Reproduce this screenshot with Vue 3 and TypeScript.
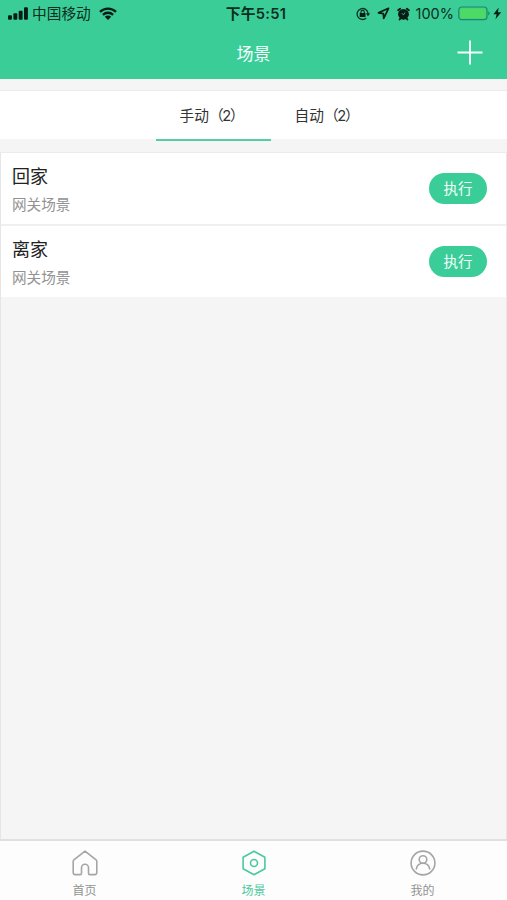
<script setup lang="ts">
import { ref } from 'vue'

interface Scene {
  id: number
  name: string
  kind: string
}

type Mode = 'manual' | 'auto'
type Page = 'home' | 'scene' | 'mine'

const tabs: { key: Mode; label: string; count: number }[] = [
  { key: 'manual', label: '手动', count: 2 },
  { key: 'auto', label: '自动', count: 2 },
]
const scenes: Scene[] = [
  { id: 1, name: '回家', kind: '网关场景' },
  { id: 2, name: '离家', kind: '网关场景' },
]
const pages: { key: Page; label: string }[] = [
  { key: 'home', label: '首页' },
  { key: 'scene', label: '场景' },
  { key: 'mine', label: '我的' },
]
const activeTab = ref<Mode>('manual')
const activePage = ref<Page>('scene')
</script>

<template>
  <div class="app">
    <header class="header">
      <div class="status">
        <div class="status-left">
          <svg class="signal" width="21" height="14" viewBox="0 0 21 14">
            <rect x="0" y="8.3" width="3.9" height="4.4" rx="1" />
            <rect x="5.4" y="6.3" width="3.9" height="6.4" rx="1" />
            <rect x="10.7" y="3.8" width="3.9" height="8.9" rx="1" />
            <rect x="16" y="0.3" width="3.9" height="12.4" rx="1" />
          </svg>
          <span class="carrier">中国移动</span>
          <svg class="wifi" width="18" height="14" viewBox="0 0 18 14">
            <path d="M1 4.8a11.6 11.6 0 0 1 16 0M3.9 7.8a7.4 7.4 0 0 1 10.2 0" fill="none" stroke="#071d15" stroke-width="2.3" />
            <path d="M5.8 9.7a4.6 4.6 0 0 1 6.4 0L9 12.9Z" />
          </svg>
        </div>
        <span class="time">下午5:51</span>
        <div class="status-right">
          <svg class="lock" width="15" height="14" viewBox="0 0 15 14">
            <path d="M10.2 11.2A5.5 5.5 0 1 1 12.1 6.3" fill="none" stroke="#0b2e21" stroke-width="1.3" />
            <path d="M9.9 6.2h4.2l-2.1 3Z" />
            <rect x="3.7" y="5.9" width="5.8" height="4.2" rx=".5" />
            <path d="M4.9 6.2V5.1a1.7 1.7 0 0 1 3.4 0v1.1" fill="none" stroke="#0b2e21" stroke-width="1.1" />
          </svg>
          <svg class="arrow" width="13" height="13" viewBox="0 0 13 13">
            <path d="M11.5 1.3 1.5 5.8l4.9.8.3 4.9Z" fill="none" stroke="#071d15" stroke-width="1.7" stroke-linejoin="round" />
          </svg>
          <svg class="alarm" width="13" height="14" viewBox="0 0 13 14">
            <circle cx="6.5" cy="7.3" r="5.4" />
            <path d="M1.2 3.3 3.1 1.7M11.8 3.3 9.9 1.7M3.3 11.6l-.7.9M9.7 11.6l.7.9" stroke="#071d15" stroke-width="1.9" stroke-linecap="round" />
            <path d="M4.7 6.5l2 1.2 1.3-2.2" fill="none" stroke="#3bcd98" stroke-width=".8" />
          </svg>
          <span class="percent">100%</span>
          <svg class="battery" width="32" height="15" viewBox="0 0 32 15">
            <rect x=".8" y="1" width="28.2" height="12.7" rx="3" fill="none" stroke="#21885f" stroke-width="1.2" />
            <rect x="2.1" y="2.4" width="25.6" height="9.9" rx="1.5" fill="#4cd964" />
            <path d="M30.2 5.2q1.4.6 1.4 2.2t-1.4 2.2Z" fill="#21885f" />
          </svg>
          <svg class="bolt" width="9" height="13" viewBox="0 0 9 13">
            <path d="M5.7.5.4 7.2h3.2L2.5 12.2 8.2 5.3H4.9Z" />
          </svg>
        </div>
      </div>
      <div class="nav">
        <h1 class="title">场景</h1>
        <button class="add" aria-label="添加">
          <svg width="26" height="26" viewBox="0 0 26 26">
            <path d="M13 .5v24M.5 12.5h25" stroke="#f4fffb" stroke-width="1.9" />
          </svg>
        </button>
      </div>
    </header>

    <nav class="tabs">
      <button
        v-for="tab in tabs"
        :key="tab.key"
        class="tab"
        :class="{ active: activeTab === tab.key }"
        @click="activeTab = tab.key"
      >{{ tab.label }}<span class="count">（{{ tab.count }}）</span></button>
    </nav>

    <main class="list">
      <article v-for="scene in scenes" :key="scene.id" class="scene">
        <div class="info">
          <h2 class="name">{{ scene.name }}</h2>
          <p class="kind">{{ scene.kind }}</p>
        </div>
        <button class="run">执行</button>
      </article>
    </main>

    <footer class="tabbar">
      <button
        v-for="page in pages"
        :key="page.key"
        class="page"
        :class="{ current: activePage === page.key }"
        @click="activePage = page.key"
      >
        <svg class="icon" width="26" height="26" viewBox="0 0 26 26">
          <template v-if="page.key === 'home'">
            <path d="M13 1.2 1.9 9.9c-.5.4-.7.8-.7 1.4v11.3c0 1.3.7 2 2 2h5q1.3 0 1.3-1.4v-5.4a3.5 3.5 0 0 1 7 0v5.4q0 1.4 1.3 1.4h5c1.3 0 2-.7 2-2V11.3c0-.6-.2-1-.7-1.4Z" />
          </template>
          <template v-else-if="page.key === 'scene'">
            <path d="M13 1.3 23.9 7.2v11.6L13 24.7 2.1 18.8V7.2Z" />
            <circle cx="13" cy="13" r="3.5" />
          </template>
          <template v-else>
            <circle cx="13" cy="13" r="11.9" />
            <circle cx="13" cy="9.5" r="3.8" />
            <path d="M6.3 18.9c.7-3.5 3.2-5.6 6.7-5.6s6 2.1 6.7 5.6" />
          </template>
        </svg>
        <span class="label">{{ page.label }}</span>
      </button>
    </footer>
  </div>
</template>

<style>
body {
  background: #f5f5f5;
}
</style>

<style scoped>
.app {
  display: flex;
  flex-direction: column;
  box-sizing: border-box;
  height: 100vh;
  background: #f5f5f5;
  font-family: Inter, "Noto Sans CJK SC", sans-serif;
  color: #222;
}
button {
  padding: 0;
  border: 0;
  background: none;
  font: inherit;
  color: inherit;
}
h1, h2, p {
  margin: 0;
  font-weight: 400;
}
svg {
  display: block;
  flex: none;
}
.header {
  flex: none;
  height: 79px;
  background: #3bcd98;
}
.status {
  display: grid;
  grid-template-columns: 1fr auto 1fr;
  align-items: center;
  height: 27px;
  padding: 0 5px 0 8px;
  color: #0b2e21;
  fill: #071d15;
  white-space: nowrap;
}
.status-left, .status-right {
  display: flex;
  align-items: center;
}
.status-right {
  justify-content: flex-end;
}
.carrier {
  margin: 0 8px 0 3px;
  font-size: 14.7px;
  line-height: 20px;
}
.time {
  padding-left: 2px;
  font-size: 14.7px;
  line-height: 20px;
  font-weight: 600;
  letter-spacing: 0.3px;
}
.arrow {
  margin-left: 6px;
}
.alarm {
  margin-left: 7px;
}
.percent {
  margin: 0 4px 0 6px;
  font-size: 14.5px;
}
.bolt {
  margin-left: 3px;
}
.nav {
  display: grid;
  grid-template-columns: 1fr auto 1fr;
  align-items: center;
  height: 52px;
  padding-right: 24px;
  padding-left: 24px;
}
.title {
  grid-column: 2;
  padding-top: 2px;
  font-size: 17px;
  line-height: 24px;
  color: #f4fffb;
}
.add {
  justify-self: end;
}
.tabs {
  flex: none;
  display: flex;
  justify-content: center;
  box-sizing: border-box;
  height: 49px;
  margin-top: 11px;
  padding-left: 35px;
  border-top: 1px solid #ebebeb;
  background: #fff;
}
.tab {
  box-sizing: border-box;
  width: 115px;
  height: 50px;
  padding-bottom: 2px;
  border-bottom: 2px solid transparent;
  font-size: 14.7px;
  color: #333;
}
.count {
  margin-right: 4px;
  letter-spacing: -1.3px;
}
.tab.active {
  border-bottom-color: #55cda3;
}
.list {
  flex: 1;
  box-sizing: border-box;
  margin-top: 13px;
  border: 1px solid #e6e6e6;
  border-top-color: #ececec;
  border-bottom: 0;
}
.scene {
  display: flex;
  align-items: center;
  justify-content: space-between;
  box-sizing: border-box;
  height: 71px;
  padding: 0 19px 0 11px;
  background: #fff;
}
.scene + .scene {
  height: 73px;
  border-top: 2px solid #efefef;
}
.name {
  padding-top: 3px;
  font-size: 18px;
  line-height: 26px;
}
.kind {
  margin-top: 4px;
  font-size: 14.6px;
  line-height: 22px;
  color: #929292;
}
.run {
  width: 58px;
  height: 31px;
  padding-top: 1px;
  border-radius: 16px;
  background: #3bcd98;
  font-size: 14.5px;
  line-height: 20px;
  color: #f4fffb;
}
.tabbar {
  flex: none;
  display: grid;
  grid-template-columns: repeat(3, 1fr);
  box-sizing: border-box;
  height: 61px;
  border-top: 2px solid #e0e0e0;
  background: #fdfdfd;
}
.page {
  display: flex;
  flex-direction: column;
  align-items: center;
  padding-top: 9px;
  color: #929292;
}
.page.current {
  color: #4bc99d;
}
.icon {
  fill: none;
  stroke: #a5a5a5;
  stroke-width: 1.6;
  stroke-linejoin: round;
  stroke-linecap: round;
}
.current .icon {
  stroke: #4bc99d;
}
.label {
  margin-top: 7px;
  font-size: 12px;
  line-height: 16px;
}
</style>
